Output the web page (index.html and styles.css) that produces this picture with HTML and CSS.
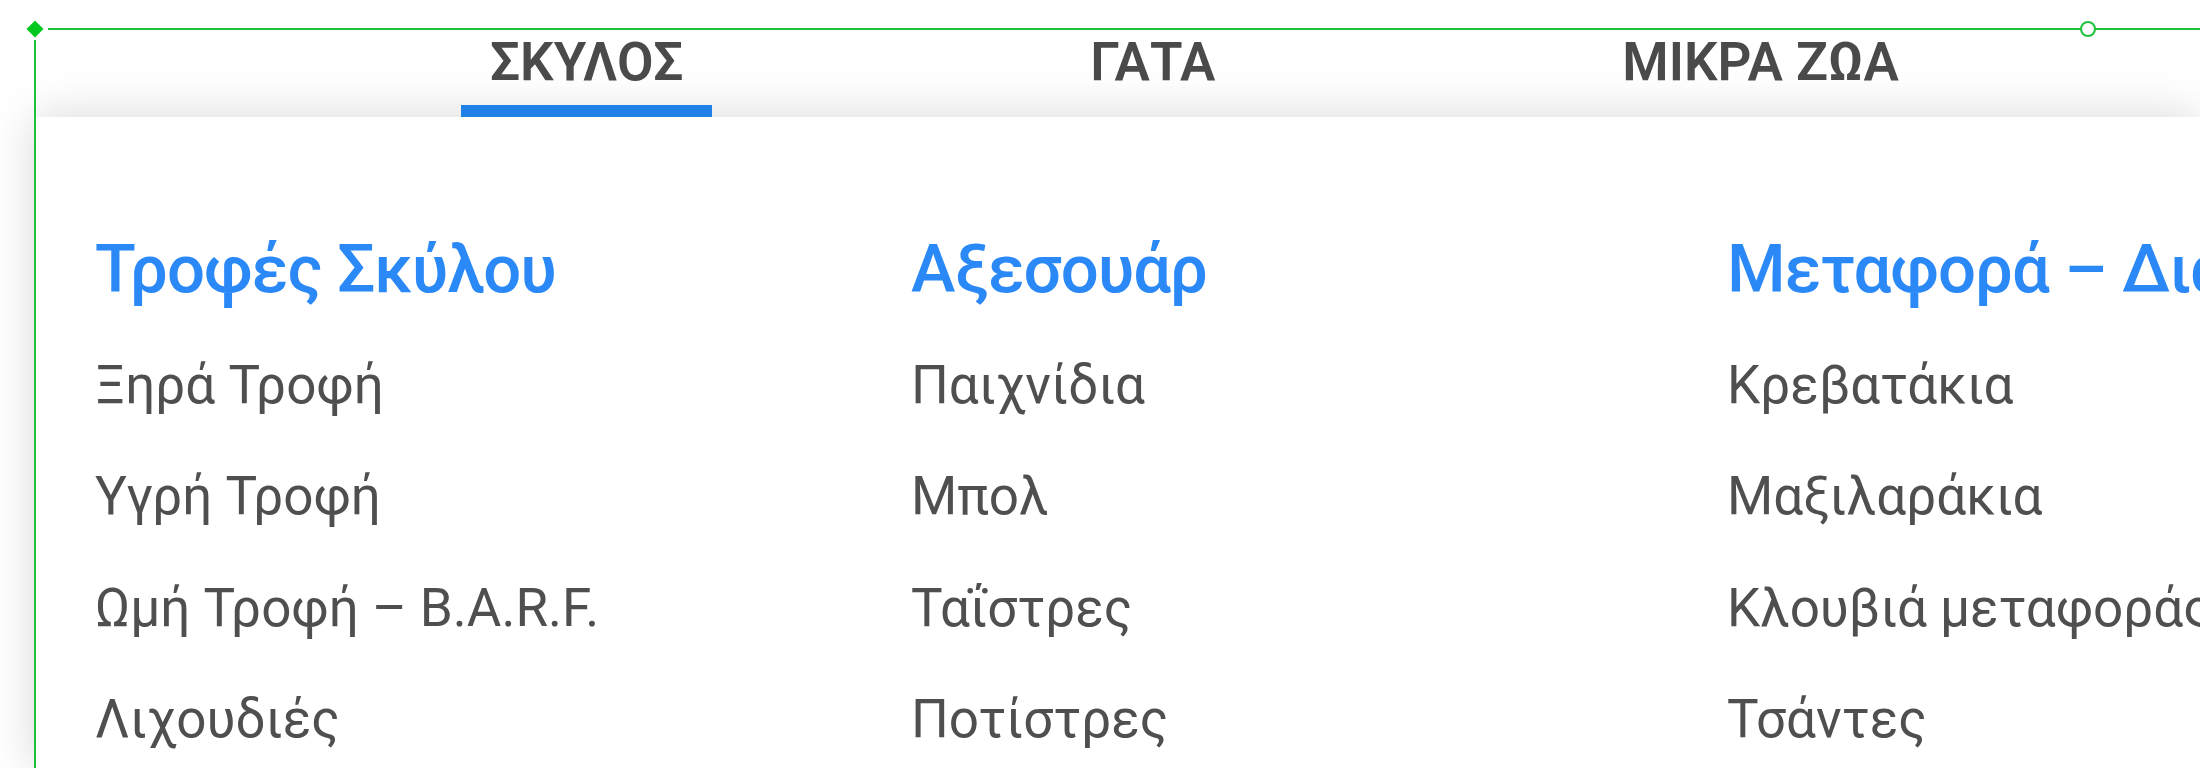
FILE: index.html
```html
<!DOCTYPE html>
<html lang="el">
<head>
<meta charset="utf-8">
<title>Mega menu</title>
<link rel="stylesheet" href="styles.css">
</head>
<body>
<div class="page">
  <nav class="tabs">
    <a class="tab active">ΣΚΥΛΟΣ</a>
    <a class="tab">ΓΑΤΑ</a>
    <a class="tab">ΜΙΚΡΑ ΖΩΑ</a>
  </nav>
  <div class="panel">
    <div class="col">
      <h3 class="col-title">Τροφές Σκύλου</h3>
      <ul class="links">
        <li>Ξηρά Τροφή</li>
        <li>Υγρή Τροφή</li>
        <li>Ωμή Τροφή – B.A.R.F.</li>
        <li>Λιχουδιές</li>
      </ul>
    </div>
    <div class="col">
      <h3 class="col-title">Αξεσουάρ</h3>
      <ul class="links">
        <li>Παιχνίδια</li>
        <li>Μπολ</li>
        <li>Ταΐστρες</li>
        <li>Ποτίστρες</li>
      </ul>
    </div>
    <div class="col">
      <h3 class="col-title">Μεταφορά – Διαμονή</h3>
      <ul class="links">
        <li>Κρεβατάκια</li>
        <li>Μαξιλαράκια</li>
        <li>Κλουβιά μεταφοράς</li>
        <li>Τσάντες</li>
      </ul>
    </div>
  </div>
  <div class="guide-h"></div>
  <div class="guide-v"></div>
  <div class="handle-diamond"></div>
  <div class="handle-circle"></div>
</div>
</body>
</html>
```

FILE: styles.css
```css
html, body {
  margin: 0;
  padding: 0;
  background: #ffffff;
}

body {
  overflow: hidden;
  font-family: Roboto, "Noto Sans", sans-serif;
}

.page {
  position: relative;
  width: 2200px;
  height: 768px;
  overflow: hidden;
}

.tabs {
  display: flex;
  align-items: flex-end;
  box-sizing: border-box;
  height: 117px;
  padding-left: 461px;
  gap: 349px;
}

.tab {
  display: block;
  font-size: 53px;
  font-weight: 600;
  line-height: 53px;
  color: #4a4a4a;
  padding: 0 29px 16px;
  border-bottom: 12px solid transparent;
  white-space: nowrap;
}

.tab.active {
  border-bottom-color: #2080e6;
}

.panel {
  box-sizing: border-box;
  height: 651px;
  margin-left: 35px;
  padding: 97px 0 0 60px;
  background: #ffffff;
  box-shadow: 0 0 45px rgba(0, 0, 0, 0.16);
  display: grid;
  grid-template-columns: repeat(3, 816px);
}

.col-title {
  margin: 0 0 4px;
  font-size: 67px;
  font-weight: 500;
  letter-spacing: -1px;
  line-height: 111.5px;
  color: #2a89f7;
  white-space: nowrap;
}

.links {
  list-style: none;
  margin: 0;
  padding: 0;
}

.links li {
  font-size: 53px;
  line-height: 111.5px;
  color: #4f4f4f;
  white-space: nowrap;
}

.guide-h {
  position: absolute;
  left: 48px;
  right: 0;
  top: 28px;
  height: 2px;
  background: #1fc13b;
}

.guide-v {
  position: absolute;
  left: 34px;
  top: 40px;
  bottom: 0;
  width: 2px;
  background: #1fc13b;
}

.handle-diamond {
  position: absolute;
  left: 29px;
  top: 23px;
  width: 12px;
  height: 12px;
  background: #00c81f;
  transform: rotate(45deg);
  box-shadow: 0 0 0 1px #ffffff;
}

.handle-circle {
  position: absolute;
  left: 2080px;
  top: 21px;
  width: 12px;
  height: 12px;
  border: 2px solid #1fc13b;
  border-radius: 50%;
  background: #ffffff;
}
```
